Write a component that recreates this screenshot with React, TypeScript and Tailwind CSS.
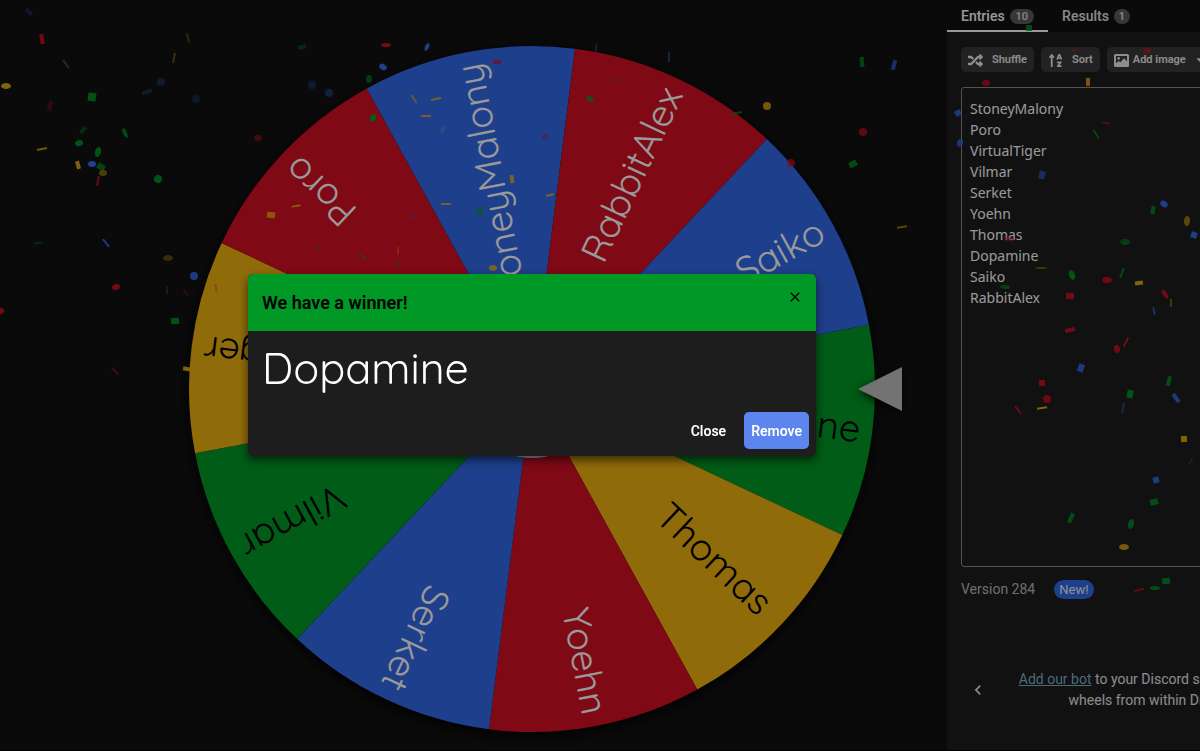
import { useState } from "react";
import { FaRandom, FaSortAlphaUp, FaCaretDown } from "react-icons/fa";
import { MdClose, MdChevronLeft } from "react-icons/md";

const RADIUS = 343;
const LABEL_RADIUS = 331;

const wheelFont = 'font-["Quicksand","Lato",sans-serif]';

type Slice = { name: string; color: string; text: string };

const RED = "#d50f25";
const BLUE = "#3369e8";
const GREEN = "#009925";
const YELLOW = "#eeb211";

// clockwise, starting with the slice under the pointer
const slices: Slice[] = [
  { name: "Dopamine", color: GREEN, text: "#000" },
  { name: "Thomas\u00a0", color: YELLOW, text: "#000" },
  { name: "Yoehn", color: RED, text: "#fff" },
  { name: "Serket", color: BLUE, text: "#fff" },
  { name: "Vilmar", color: GREEN, text: "#000" },
  { name: "VirtualTiger", color: YELLOW, text: "#000" },
  { name: "Poro", color: RED, text: "#fff" },
  { name: "StoneyMalony", color: BLUE, text: "#fff" },
  { name: "RabbitAlex", color: RED, text: "#fff" },
  { name: "Saiko", color: BLUE, text: "#fff" },
];

const entries = [
  "StoneyMalony",
  "Poro",
  "VirtualTiger",
  "Vilmar",
  "Serket",
  "Yoehn",
  "Thomas",
  "Dopamine",
  "Saiko",
  "RabbitAlex",
];

// x, y, rx, ry, rotation, color, opacity, shape
type Piece = [number, number, number, number, number, string, number, "o" | "r"];

const confetti: Piece[] = [
  [29, 12, 4, 2, 50, BLUE, 0.25, "r"],
  [42, 39, 2, 5, -8, RED, 0.9, "r"],
  [66, 64, 5, 1, 55, YELLOW, 0.3, "r"],
  [188, 38, 1, 5, -15, YELLOW, 0.3, "r"],
  [174, 58, 1, 5, 10, YELLOW, 0.4, "r"],
  [6, 86, 5, 3, 0, YELLOW, 0.9, "o"],
  [161, 82, 4, 4, 0, BLUE, 0.3, "o"],
  [147, 92, 5, 2, -20, BLUE, 0.3, "r"],
  [196, 99, 4, 4, 0, BLUE, 0.25, "o"],
  [92, 97, 4, 4, 8, GREEN, 0.9, "r"],
  [50, 106, 2, 5, 15, RED, 0.3, "r"],
  [83, 130, 4, 2, -50, GREEN, 0.4, "r"],
  [125, 133, 2, 5, -25, GREEN, 0.8, "o"],
  [79, 143, 4, 3, -20, GREEN, 0.9, "o"],
  [98, 152, 3, 5, 15, GREEN, 0.9, "o"],
  [42, 149, 5, 1, -12, YELLOW, 0.8, "r"],
  [78, 165, 2, 4, -15, YELLOW, 0.9, "r"],
  [92, 164, 4, 3, 0, BLUE, 1, "o"],
  [101, 167, 4, 3, 35, GREEN, 0.7, "r"],
  [103, 173, 4, 3, 0, YELLOW, 0.5, "o"],
  [98, 181, 1, 5, 12, RED, 0.8, "r"],
  [158, 179, 4, 4, 30, GREEN, 0.9, "o"],
  [38, 243, 5, 1, -5, GREEN, 0.4, "o"],
  [106, 243, 1, 5, -38, BLUE, 0.9, "r"],
  [168, 258, 5, 3, 0, YELLOW, 0.35, "o"],
  [194, 276, 4, 4, 0, BLUE, 0.9, "o"],
  [116, 287, 4, 3, -20, RED, 0.9, "o"],
  [167, 290, 1, 4, 0, GREEN, 0.4, "r"],
  [186, 293, 1, 4, -40, RED, 0.4, "r"],
  [175, 321, 4, 3, -5, GREEN, 0.9, "r"],
  [1, 311, 3, 3, 30, RED, 0.9, "o"],
  [115, 371, 1, 5, -45, RED, 0.5, "r"],
  [187, 369, 4, 2, 10, YELLOW, 0.9, "r"],
  [216, 288, 1, 4, -10, RED, 0.3, "r"],
  [302, 47, 4, 2, -10, GREEN, 0.4, "r"],
  [386, 45, 5, 2, 0, RED, 0.9, "o"],
  [427, 47, 2, 4, 25, BLUE, 1, "o"],
  [383, 67, 4, 3, 30, BLUE, 1, "o"],
  [369, 79, 3, 4, 0, GREEN, 0.6, "o"],
  [312, 85, 4, 4, 0, BLUE, 0.3, "o"],
  [329, 93, 4, 4, 0, BLUE, 0.4, "o"],
  [258, 138, 4, 3, -15, RED, 0.5, "o"],
  [373, 118, 3, 4, 25, "#0a9c2a", 1, "o"],
  [414, 99, 1, 5, -35, YELLOW, 0.6, "r"],
  [436, 99, 5, 1, -12, YELLOW, 0.8, "r"],
  [426, 116, 5, 1, 2, YELLOW, 0.8, "r"],
  [443, 129, 2, 4, 15, "#8fa0b8", 0.3, "r"],
  [497, 62, 4, 2, 5, RED, 0.7, "r"],
  [512, 179, 2, 4, -8, YELLOW, 0.8, "r"],
  [446, 204, 5, 1, 0, YELLOW, 0.8, "r"],
  [480, 211, 3, 4, 10, GREEN, 0.6, "r"],
  [493, 268, 4, 3, 0, YELLOW, 0.8, "o"],
  [296, 206, 5, 1, -10, YELLOW, 0.8, "o"],
  [271, 215, 4, 3, 8, YELLOW, 0.8, "r"],
  [319, 248, 3, 3, 0, GREEN, 0.2, "o"],
  [363, 257, 1, 4, -45, GREEN, 0.6, "r"],
  [398, 251, 1, 4, 0, YELLOW, 0.3, "r"],
  [398, 264, 1, 4, -20, GREEN, 0.4, "r"],
  [414, 217, 4, 3, 0, BLUE, 0.15, "o"],
  [596, 48, 1, 4, 10, BLUE, 0.4, "r"],
  [669, 57, 1, 5, 0, BLUE, 0.5, "r"],
  [590, 99, 4, 3, 20, GREEN, 0.7, "o"],
  [616, 80, 5, 1, -5, GREEN, 0.3, "o"],
  [545, 137, 3, 3, 0, RED, 0.4, "o"],
  [550, 195, 4, 1, -12, YELLOW, 0.8, "r"],
  [737, 113, 5, 1, -12, GREEN, 0.7, "r"],
  [767, 106, 4, 4, 0, YELLOW, 0.8, "o"],
  [862, 62, 2, 5, -5, GREEN, 0.7, "r"],
  [894, 65, 2, 5, 15, BLUE, 0.7, "r"],
  [863, 132, 4, 4, 0, RED, 0.7, "o"],
  [791, 163, 4, 4, 0, RED, 0.7, "o"],
  [853, 164, 4, 3, -30, GREEN, 0.8, "r"],
  [902, 227, 5, 1, -8, YELLOW, 0.6, "r"],
  [1029, 28, 3, 3, 0, GREEN, 0.8, "r"],
  [986, 83, 4, 3, 0, RED, 0.8, "o"],
  [1088, 82, 2, 4, 0, YELLOW, 0.8, "r"],
  [1147, 51, 4, 3, 0, RED, 0.6, "o"],
  [1074, 50, 4, 1, -10, RED, 0.4, "r"],
  [958, 113, 3, 3, -30, BLUE, 0.9, "r"],
  [960, 143, 3, 4, 20, BLUE, 0.8, "o"],
  [1096, 134, 1, 5, -35, GREEN, 0.7, "r"],
  [1106, 123, 5, 1, 8, RED, 0.6, "o"],
  [1042, 175, 3, 4, 15, BLUE, 0.6, "r"],
  [1153, 210, 2, 4, 10, GREEN, 0.8, "r"],
  [1164, 204, 4, 3, 35, BLUE, 1, "o"],
  [1187, 221, 3, 5, 5, YELLOW, 0.6, "o"],
  [1194, 235, 3, 3, 15, BLUE, 1, "r"],
  [1125, 242, 5, 3, 0, GREEN, 0.6, "o"],
  [1009, 239, 5, 2, 5, RED, 0.5, "r"],
  [1041, 268, 6, 1, 0, YELLOW, 0.4, "o"],
  [1005, 287, 5, 2, 5, GREEN, 0.6, "o"],
  [1072, 275, 3, 5, -20, GREEN, 0.9, "o"],
  [1122, 273, 1, 5, 22, GREEN, 0.8, "r"],
  [1107, 280, 5, 3, 0, RED, 0.9, "o"],
  [1139, 283, 4, 2, -8, YELLOW, 0.9, "r"],
  [1070, 296, 4, 3, 5, RED, 0.9, "r"],
  [1165, 294, 2, 5, -30, RED, 0.9, "o"],
  [1171, 303, 1, 4, 0, YELLOW, 0.4, "r"],
  [1154, 311, 1, 4, -10, BLUE, 0.7, "r"],
  [1070, 330, 5, 2, -15, RED, 0.9, "r"],
  [1126, 342, 1, 5, 28, RED, 0.9, "r"],
  [1117, 349, 3, 4, -8, RED, 0.9, "o"],
  [1081, 368, 3, 4, 20, BLUE, 0.9, "r"],
  [1042, 383, 3, 3, -5, RED, 0.9, "r"],
  [1047, 399, 4, 4, 0, RED, 0.8, "o"],
  [1018, 410, 1, 5, -38, RED, 0.8, "r"],
  [1042, 408, 5, 1, -8, YELLOW, 0.9, "r"],
  [1169, 381, 2, 5, 15, GREEN, 0.8, "r"],
  [1130, 394, 3, 4, 12, GREEN, 0.9, "r"],
  [1176, 398, 2, 5, -35, BLUE, 0.9, "r"],
  [1123, 408, 1, 5, 10, BLUE, 0.5, "r"],
  [1184, 439, 3, 3, -5, YELLOW, 0.9, "r"],
  [1191, 461, 1, 4, 25, BLUE, 0.3, "r"],
  [1156, 480, 3, 3, -15, BLUE, 0.9, "r"],
  [1154, 502, 4, 3, -15, GREEN, 0.8, "r"],
  [1071, 518, 2, 5, 25, GREEN, 0.8, "r"],
  [1131, 524, 3, 5, 15, GREEN, 0.8, "o"],
  [1124, 547, 5, 3, 0, YELLOW, 0.8, "o"],
  [1139, 590, 5, 1, -15, RED, 0.7, "r"],
  [1155, 588, 5, 2, 0, GREEN, 0.8, "o"],
  [1166, 581, 4, 3, -5, GREEN, 0.8, "r"],
];

function polar(deg: number, r: number) {
  const rad = (deg * Math.PI) / 180;
  return `${r * Math.cos(rad)} ${r * Math.sin(rad)}`;
}

function ImageIcon() {
  return (
    <svg width="15" height="13" viewBox="0 0 15 13" aria-hidden="true">
      <rect
        x="1"
        y="1"
        width="13"
        height="11"
        rx="0.5"
        fill="none"
        stroke="currentColor"
        strokeWidth="2"
      />
      <circle cx="4.6" cy="4.4" r="1.3" fill="currentColor" />
      <path d="M1.5 11.5V9.5l3.3-2.6 1.6 1.4L10 4.2l3.5 3.6v3.7z" fill="currentColor" />
    </svg>
  );
}

function Wheel() {
  return (
    <svg
      viewBox="-415 -361 830 722"
      className="h-[722px] w-full overflow-visible"
      role="img"
      aria-label="Wheel of names"
    >
      <circle
        r={RADIUS}
        fill="#000"
        className="drop-shadow-[0_4px_8px_rgba(0,0,0,0.9)]"
      />
      {slices.map((slice, i) => {
        const mid = 7.2 + i * 36;
        return (
          <g key={slice.name}>
            <path
              d={`M0 0L${polar(mid - 18, RADIUS)}A${RADIUS} ${RADIUS} 0 0 1 ${polar(mid + 18, RADIUS)}Z`}
              fill={slice.color}
            />
            <text
              x={LABEL_RADIUS}
              y={12}
              textAnchor="end"
              fill={slice.text}
              transform={`rotate(${mid})`}
              className={`${wheelFont} text-[38px] font-normal`}
            >
              {slice.name}
            </text>
          </g>
        );
      })}
      <circle r={69} fill="#fff" />
      <path
        d="M326 0L370 -22V22Z"
        fill="#c0c0c0"
        className="drop-shadow-[0_3px_5px_rgba(0,0,0,0.8)]"
      />
    </svg>
  );
}

function Confetti() {
  return (
    <svg
      className="pointer-events-none absolute inset-0 h-full w-full"
      aria-hidden="true"
    >
      {confetti.map(([x, y, rx, ry, rot, color, opacity, shape], i) => (
        <g
          key={i}
          transform={`translate(${x} ${y}) rotate(${rot})`}
          fill={color}
          opacity={opacity}
        >
          {shape === "o" ? (
            <ellipse rx={rx} ry={ry} />
          ) : (
            <rect x={-rx} y={-ry} width={rx * 2} height={ry * 2} />
          )}
        </g>
      ))}
    </svg>
  );
}

function SidePanel() {
  const [text, setText] = useState(entries.join("\n"));
  const tool =
    "flex h-[25px] items-center rounded-[5px] bg-[#3a3a3a] pt-px text-[11px] font-semibold text-white/90";

  return (
    <aside className="w-[253px] shrink-0 overflow-hidden bg-[#1d1d1d] text-white/90">
      <div className="flex w-[410px] flex-col">
        <div className="flex h-8 items-start bg-[#121212] text-sm font-medium">
          <button className="flex h-8 items-center gap-[5px] border-b-2 border-white px-3.5 pt-0.5 text-white">
            Entries
            <span className="rounded-full bg-[#5c5c5c] px-1.5 text-[11px] leading-[15px] text-white/80">
              10
            </span>
          </button>
          <button className="flex h-8 items-center gap-[5px] border-b-2 border-transparent px-3.5 pt-0.5">
            Results
            <span className="rounded-full bg-[#5c5c5c] px-[5px] text-[11px] leading-[15px]">
              1
            </span>
          </button>
        </div>
        <div className="flex flex-col px-3.5 pt-[15px]">
          <div className="flex gap-[7px]">
            <button className={`${tool} gap-[9px] px-[7px]`}>
              <FaRandom size={15} />
              Shuffle
            </button>
            <button className={`${tool} gap-[9px] px-[7px]`}>
              <FaSortAlphaUp size={15} />
              Sort
            </button>
            <button className={`${tool} gap-1 px-[7px]`}>
              <ImageIcon />
              Add image
              <FaCaretDown size={14} className="ml-1" />
            </button>
          </div>
          <textarea
            aria-label="Entries"
            value={text}
            onChange={(e) => setText(e.target.value)}
            spellCheck={false}
            className='mt-[15px] h-[480px] w-full resize-none rounded-[3px] border border-[#8a8a8a] bg-transparent px-2 py-2.5 font-["Segoe_UI","Noto_Sans",sans-serif] text-sm leading-[21px] text-white outline-none'
          />
          <div className="mt-3 flex h-5 items-center gap-[19px] text-sm text-white/70">
            Version 284
            <span className="rounded-full bg-[#3369e8] px-[5px] text-[13px] leading-[19px] text-white/90">
              New!
            </span>
          </div>
        </div>
        <div className="mt-[70px] flex items-center pl-[21px] text-sm leading-[21px]">
          <button aria-label="Previous" className="w-5">
            <MdChevronLeft size={20} />
          </button>
          <p className="w-[330px] text-center">
            <a href="#" className="text-[#7fb0cf] underline">
              Add our bot
            </a>{" "}
            to your Discord server and spin
            <br />
            wheels from within Discord
          </p>
        </div>
      </div>
    </aside>
  );
}

function WinnerDialog({ onClose }: { onClose: () => void }) {
  return (
    <div className="fixed inset-0 flex items-center justify-center bg-black/40 pr-[253px] pb-[21px] pl-[117px]">
      <div
        role="dialog"
        aria-labelledby="winner-title"
        className="w-full max-w-[568px] overflow-hidden rounded-[5px] bg-[#1d1d1d] shadow-[0_4px_10px_rgba(0,0,0,0.6)]"
      >
        <header className="flex h-[57px] items-center justify-between bg-[#009925] pr-[13px] pl-3.5 text-black">
          <h2 id="winner-title" className="text-lg font-semibold">
            We have a winner!
          </h2>
          <button aria-label="Close dialog" onClick={onClose} className="mb-3">
            <MdClose size={16} stroke="currentColor" />
          </button>
        </header>
        <p
          className={`${wheelFont} px-3.5 pt-[7px] pb-0.5 text-[43px] leading-[60px] font-normal text-white`}
        >
          Dopamine
        </p>
        <div className="flex justify-end gap-3 pt-3 pr-[7px] pb-[7px] text-sm font-semibold text-white">
          <button onClick={onClose} className="h-[37px] px-1.5">
            Close
          </button>
          <button
            onClick={onClose}
            className="h-[37px] rounded-[5px] bg-[#5c85ed] px-[7px]"
          >
            Remove
          </button>
        </div>
      </div>
    </div>
  );
}

export default function App() {
  const [open, setOpen] = useState(true);

  return (
    <div className='relative flex min-h-screen overflow-hidden border-b-2 border-black bg-[#121212] font-["Roboto",sans-serif]'>
      <main className="flex min-w-0 flex-1 items-start pt-7 pl-[117px]">
        <Wheel />
      </main>
      <SidePanel />
      <Confetti />
      {open && <WinnerDialog onClose={() => setOpen(false)} />}
    </div>
  );
}
